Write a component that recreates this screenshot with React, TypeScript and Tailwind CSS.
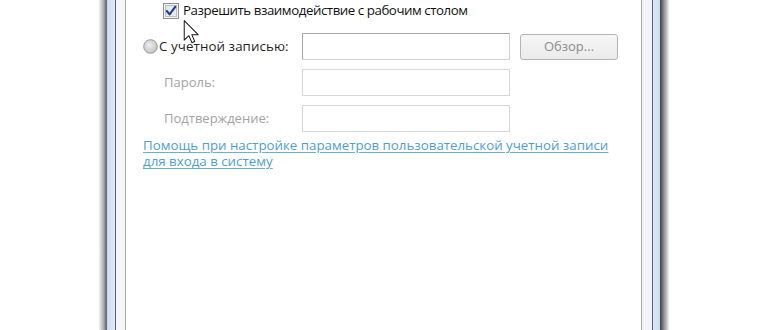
export default function App() {
  return (
    <div className="flex h-[330px] w-[770px] bg-white font-['Open_Sans',sans-serif] overflow-hidden">
      {/* left outside */}
      <div className="w-[99px] shrink-0 bg-white" />
      {/* left frame */}
      <div className="w-[8px] shrink-0 bg-gradient-to-r from-[#f2f2f2] via-[#b8b8b8] to-[#5a5f66]" />
      <div className="w-[8px] shrink-0 bg-gradient-to-r from-[#c8dbef] to-[#dfeaf6]" />
      <div className="w-px shrink-0 bg-[#55606c]" />
      <div className="w-[9px] shrink-0 bg-[#f4f5f6]" />
      <div className="w-px shrink-0 bg-[#a9a9a9]" />

      {/* content */}
      <div className="relative w-[515px] shrink-0 bg-white text-[13.3px] text-[#1e1e1e]">
        <div className="flex h-[22px] items-center pl-[37px]">
          <Checkbox />
          <span className="ml-[4px] leading-none tracking-[-0.45px] text-[#111]">Разрешить взаимодействие с рабочим столом</span>
        </div>

        <div className="mt-[11px] flex h-[27px] items-center">
          <div className="flex w-[176px] items-center pl-[17px]">
            <Radio />
            <span className="ml-[1px] leading-none tracking-[0.1px]">С учетной записью:</span>
          </div>
          <div className="h-[27px] w-[208px] border border-[#a5a5a5] border-b-[#d4d4d4] border-r-[#cfcfcf] bg-white" />
          <button className="ml-[10px] h-[26px] w-[98px] rounded-[3px] border border-[#b4b4b4] bg-gradient-to-b from-[#f6f6f6] to-[#ebebeb] text-[13px] text-[#8c8c8c]">
            Обзор...
          </button>
        </div>

        <div className="mt-[9px] flex h-[27px] items-center">
          <div className="w-[176px] pl-[38px] text-[13px] leading-none text-[#a3a3a3]">Пароль:</div>
          <div className="h-[27px] w-[208px] border border-[#d6d6d6] bg-white" />
        </div>

        <div className="mt-[9px] flex h-[27px] items-center">
          <div className="w-[176px] pl-[38px] text-[13px] leading-none text-[#a3a3a3]">Подтверждение:</div>
          <div className="h-[27px] w-[208px] border border-[#d6d6d6] bg-white" />
        </div>

        <div className="mt-[5px] pl-[17px] pr-[20px] leading-[16px] text-[#4f9ecc] underline decoration-[#6aaed6] underline-offset-2">
          <a>Помощь при настройке параметров пользовательской учетной записи для входа в систему</a>
        </div>

        {/* mouse pointer */}
        <svg className="absolute left-[57px] top-[20px]" width="17" height="24" viewBox="0 0 12.5 19">
          <path
            d="M0.5 0.5 L0.5 16 L4.2 12.4 L6.6 18 L8.8 17 L6.5 11.6 L11.5 11.6 Z"
            fill="#ffffff"
            stroke="#1a1a1a"
            strokeWidth="0.8"
            strokeLinejoin="round"
          />
        </svg>
      </div>

      {/* right frame */}
      <div className="w-px shrink-0 bg-[#a9a9a9]" />
      <div className="w-[10px] shrink-0 bg-[#f2f3f4]" />
      <div className="w-px shrink-0 bg-[#55606c]" />
      <div className="w-[7px] shrink-0 bg-gradient-to-r from-[#dfeaf6] to-[#c8dbef]" />
      <div className="w-[9px] shrink-0 bg-gradient-to-r from-[#3c4148] via-[#9a9a9a] to-[#f2f2f2]" />
      <div className="flex-1 bg-white" />
    </div>
  );
}

function Checkbox() {
  return (
    <svg width="16" height="16" viewBox="0 0 16 16">
      <rect x="0.5" y="0.5" width="15" height="15" fill="#f4f4f4" stroke="#8e8f8f" />
      <rect x="2.5" y="2.5" width="11" height="11" fill="#e6e9ee" stroke="#b9bdc3" />
      <path d="M3.8 8 L6.6 11.4 L12.2 3.8" fill="none" stroke="#263a87" strokeWidth="2.1" strokeLinecap="round" strokeLinejoin="round" />
    </svg>
  );
}

function Radio() {
  return (
    <svg width="15" height="15" viewBox="0 0 15 15">
      <defs>
        <radialGradient id="rg" cx="0.4" cy="0.35" r="0.7">
          <stop offset="0" stopColor="#f0f0f0" />
          <stop offset="1" stopColor="#bdbdbd" />
        </radialGradient>
      </defs>
      <circle cx="7.5" cy="7.5" r="6.8" fill="url(#rg)" stroke="#979797" strokeWidth="1" />
      <circle cx="7.5" cy="7.5" r="4.5" fill="none" stroke="#d6d6d6" strokeWidth="1" />
    </svg>
  );
}
